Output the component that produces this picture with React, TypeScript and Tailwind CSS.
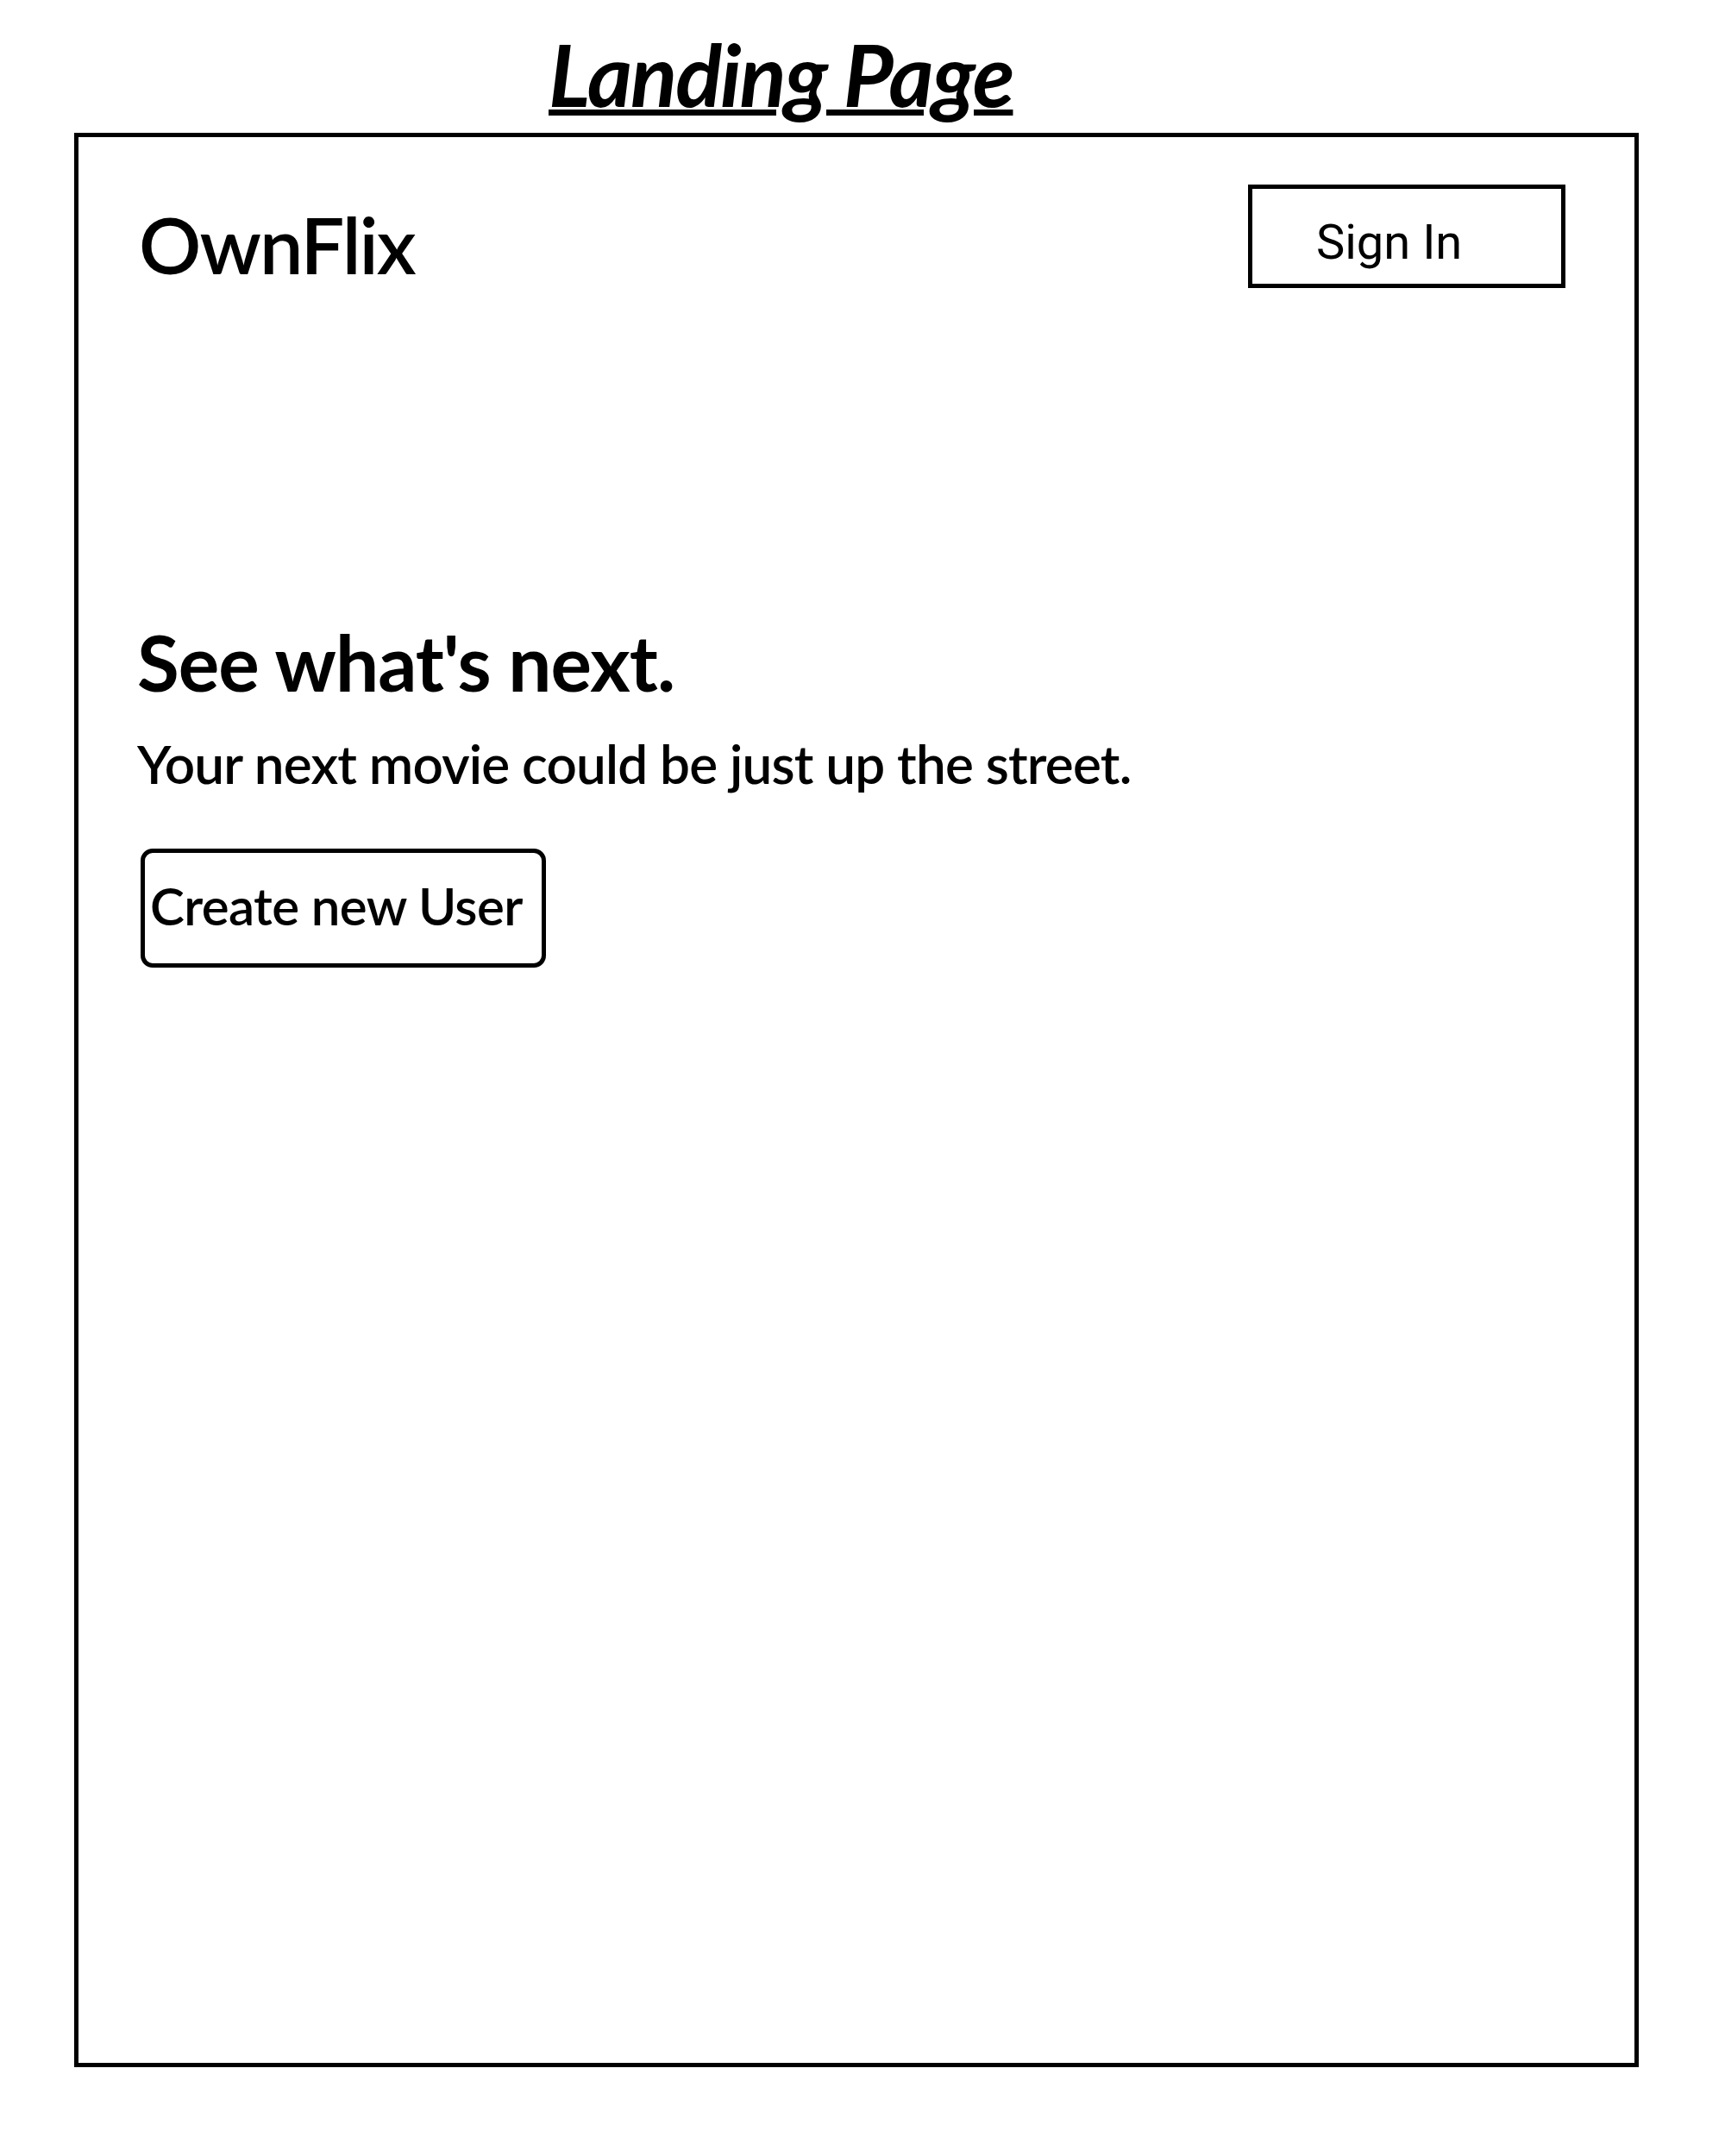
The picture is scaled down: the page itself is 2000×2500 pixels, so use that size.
export default function App() {
  return (
    <div className="w-[2000px] h-[2500px] bg-white text-black" style={{ fontFamily: 'Lato, "Noto Sans", sans-serif' }}>
      <div className="pt-[30px] pl-[636px]">
        <h1 className="text-[100px] leading-[110px] font-bold italic underline decoration-[7px] underline-offset-[3px] tracking-[-2px]">
          Landing Page
        </h1>
      </div>

      <div className="ml-[86px] mt-[14px] w-[1814px] h-[2243px] border-[5px] border-black">
        <div className="flex items-start justify-between pl-[70px] pr-[80px] pt-[55px]">
          <div className="text-[90px] leading-[110px] mt-[14px] font-semibold tracking-[-2px]">OwnFlix</div>
          <button
            className="w-[368px] h-[120px] border-[5px] border-black flex items-center justify-start pl-[74px] pt-[14px] text-[56px] whitespace-nowrap"
            style={{ fontFamily: 'Roboto, sans-serif' }}
          >
            Sign In
          </button>
        </div>

        <div className="pl-[68px] pt-[380px]">
          <h2 className="text-[89px] leading-[100px] font-bold tracking-[-1px]">See what's next.</h2>
          <p className="mt-[27px] text-[62px] leading-[80px] font-semibold tracking-[-0.8px]">
            Your next movie could be just up the street.
          </p>
          <button className="mt-[59px] ml-[4px] w-[470px] h-[138px] border-[5px] border-black rounded-[14px] flex items-center justify-start pl-[6px] pb-[6px] text-[60px] font-semibold tracking-[-0.6px] whitespace-nowrap">
            Create new User
          </button>
        </div>
      </div>
    </div>
  )
}
